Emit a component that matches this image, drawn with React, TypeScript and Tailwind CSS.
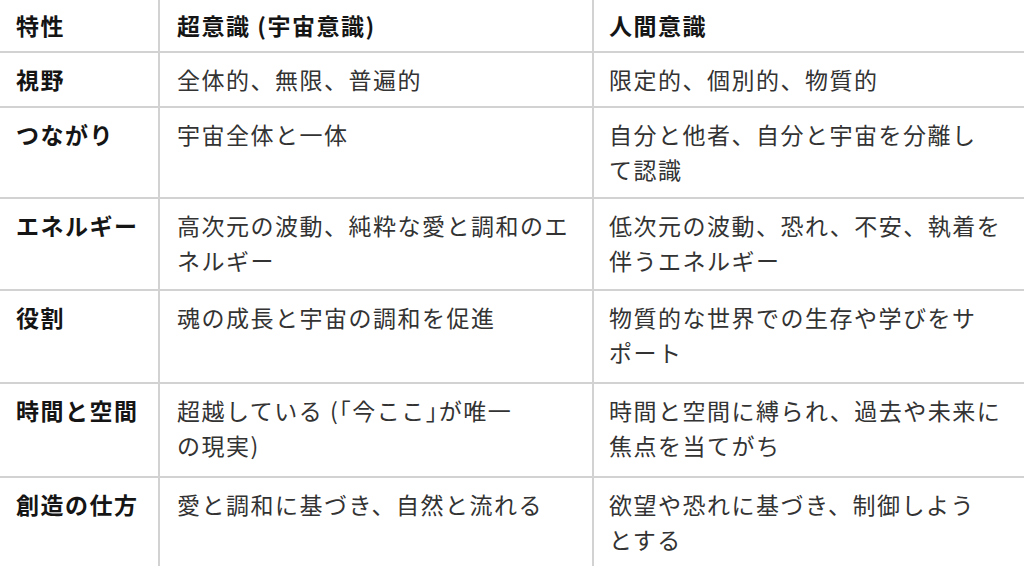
import React from 'react';

type Row = {
  label: string;
  cosmic: React.ReactNode[];
  human: string[];
  h: string;
};

// 「」 are set half-width like in the source screenshot
const Halt: React.FC<{ children: React.ReactNode }> = ({ children }) => (
  <span className="[font-feature-settings:'halt']">{children}</span>
);

const rows: Row[] = [
  { label: '視野', cosmic: ['全体的、無限、普遍的'], human: ['限定的、個別的、物質的'], h: 'h-[55px]' },
  { label: 'つながり', cosmic: ['宇宙全体と一体'], human: ['自分と他者、自分と宇宙を分離し', 'て認識'], h: 'h-[91px]' },
  {
    label: 'エネルギー',
    cosmic: ['高次元の波動、純粋な愛と調和のエ', 'ネルギー'],
    human: ['低次元の波動、恐れ、不安、執着を', '伴うエネルギー'],
    h: 'h-[92px]',
  },
  { label: '役割', cosmic: ['魂の成長と宇宙の調和を促進'], human: ['物質的な世界での生存や学びをサ', 'ポート'], h: 'h-[93px]' },
  {
    label: '時間と空間',
    cosmic: [
      <>
        超越している (<Halt>「</Halt>今ここ<Halt>」</Halt>が唯一
      </>,
      'の現実)',
    ],
    human: ['時間と空間に縛られ、過去や未来に', '焦点を当てがち'],
    h: 'h-[94px]',
  },
  { label: '創造の仕方', cosmic: ['愛と調和に基づき、自然と流れる'], human: ['欲望や恐れに基づき、制御しよう', 'とする'], h: 'h-[92px]' },
];

const Lines: React.FC<{ lines: React.ReactNode[] }> = ({ lines }) => (
  <>
    {lines.map((l, i) => (
      <div key={i} className="whitespace-nowrap">
        {l}
      </div>
    ))}
  </>
);

export default function App() {
  return (
    <div
      className="w-[1024px] h-[566px] overflow-hidden bg-white text-[23px] leading-[35px] tracking-[1.5px] text-[#333333]"
      style={{ fontFamily: '"Noto Sans CJK JP", "Noto Sans", sans-serif' }}
    >
      {/* ヘッダー */}
      <div className="grid grid-cols-[160px_434px_1fr] h-[53px] border-b-2 border-[#d2d2d2] font-bold text-[#151515]">
        <div className="border-r-2 border-[#d2d2d2] pl-[16px] pt-[8px]">特性</div>
        <div className="border-r-2 border-[#d2d2d2] pl-[17px] pt-[8px] whitespace-nowrap">超意識 (宇宙意識)</div>
        <div className="pl-[15px] pt-[8px]">人間意識</div>
      </div>

      {rows.map((r) => (
        <div key={r.label} className={`grid grid-cols-[160px_434px_1fr] ${r.h} border-b-2 border-[#d2d2d2]`}>
          <div className="border-r-2 border-[#d2d2d2] pl-[16px] pt-[9px] font-bold text-[#151515] whitespace-nowrap">
            {r.label}
          </div>
          <div className="border-r-2 border-[#d2d2d2] pl-[17px] pt-[9px]">
            <Lines lines={r.cosmic} />
          </div>
          <div className="pl-[15px] pt-[9px]">
            <Lines lines={r.human} />
          </div>
        </div>
      ))}
    </div>
  );
}
